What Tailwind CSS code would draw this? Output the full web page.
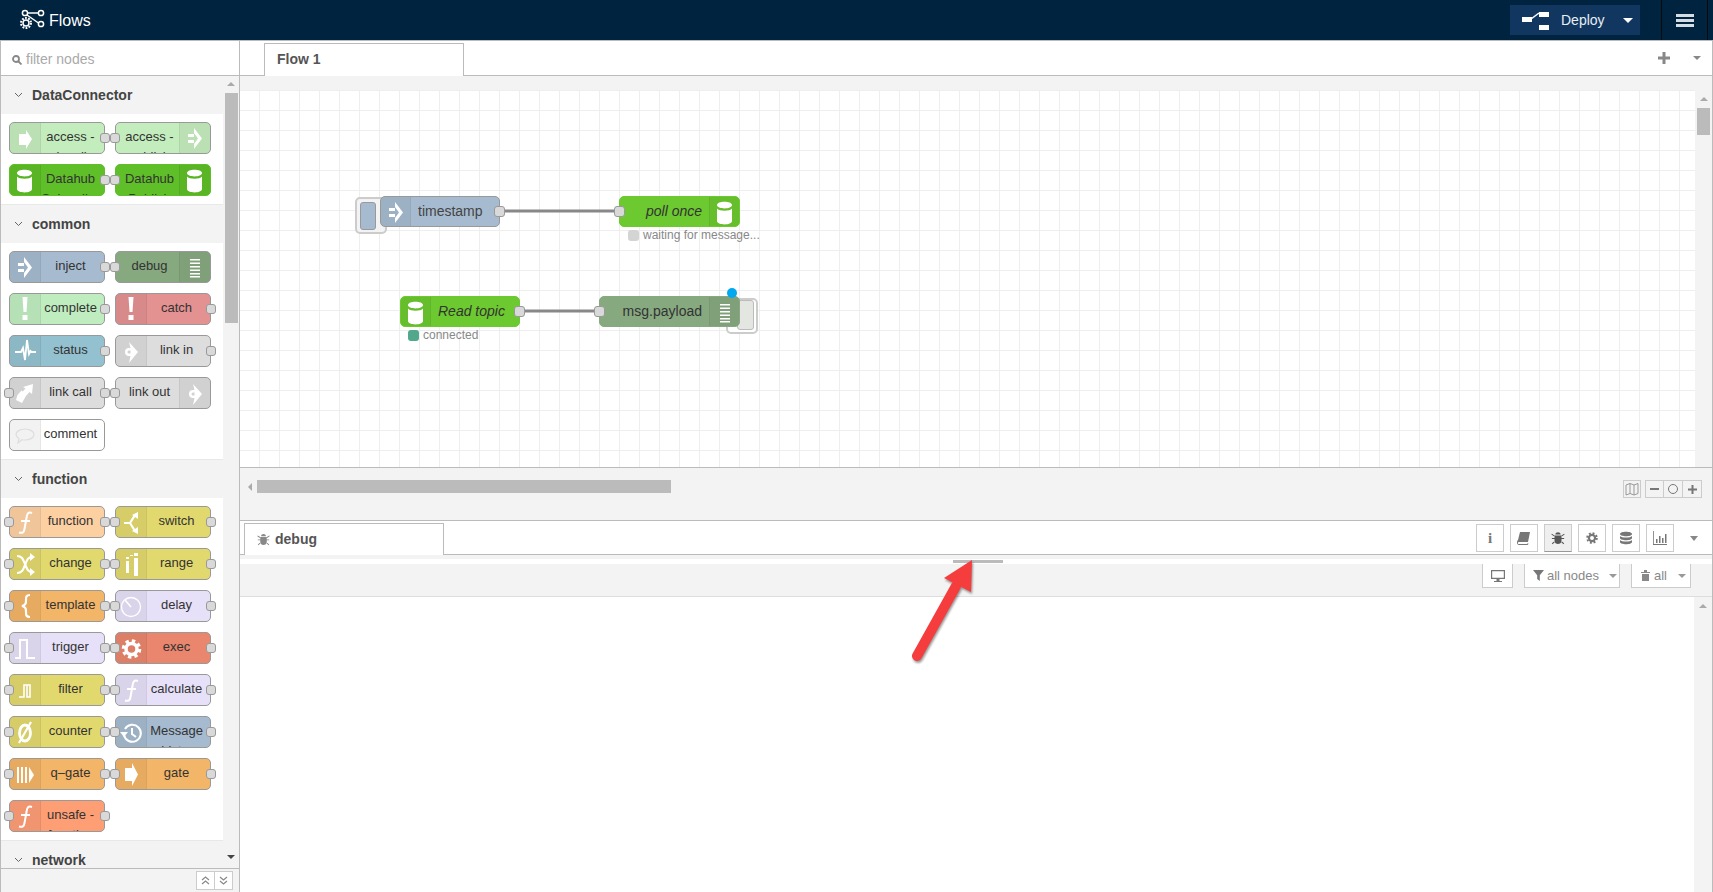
<!DOCTYPE html>
<html lang="en">
<head>
  <meta charset="UTF-8" />
  <title>Flows</title>
  <script src="https://cdn.jsdelivr.net/npm/@tailwindcss/browser@4"></script>
</head>
<body class="relative h-[892px] w-[1713px] overflow-hidden bg-white font-['Liberation_Sans',Arial,sans-serif] text-[#333]">

  <!-- icons used by the palette and the canvas -->
  <svg class="hidden">
    <symbol id="i-gate" viewBox="0 0 30 30"><path fill="currentColor" d="M9 9h7V4l6 11.500L16 27v-5H9z"/></symbol>
    <symbol id="i-access" viewBox="0 0 30 30"><path fill="currentColor" d="M9 11h7V7l6 9-6 10v-4H9z"/></symbol>
    <symbol id="i-inject" viewBox="0 0 30 30"><path fill="currentColor" d="M8 11h6v3H8zM8 17h6v3H8zM14 5l8 10.500L14 26v-5l4-5.500-4-5.500z"/></symbol>
    <symbol id="i-db" viewBox="0 0 30 30"><path fill="currentColor" d="M7 8c0-4.500 15-4.500 15 0s-15 4.500-15 0zM7 11.500c2 3 13 3 15 0V24c0 4.500-15 4.500-15 0z"/></symbol>
    <symbol id="i-lines" viewBox="0 0 30 30"><path fill="currentColor" d="M10 7h10v1.500H10zM10 10.500h10V12H10zM10 14h10v1.500H10zM10 17.500h10V19H10zM10 21h10v1.500H10zM10 24h10v1.500H10z"/></symbol>
    <symbol id="i-alert" viewBox="0 0 30 30"><path fill="currentColor" d="M12.500 3h5l-1 15h-3zM12.500 21h5v5h-5z"/></symbol>
    <symbol id="i-pulse" viewBox="0 0 30 30"><path fill="none" stroke="currentColor" stroke-width="1.800" d="M5 16h6l2-4 2 12 2-20 2 14 1.500-3 1 1H26"/></symbol>
    <symbol id="i-link-in" viewBox="0 0 30 30"><path fill="currentColor" fill-rule="evenodd" d="M13 6l9 10-9 11 1.500-7H13a4 4 0 0 1 0-8h1.500zM13 14.500a1.500 1.500 0 0 0 0 3h1.500v-3z"/></symbol>
    <symbol id="i-link-call" viewBox="0 0 30 30"><path fill="currentColor" d="M13 9l10-3-1 10-2.500-2-4.500 5-4-3.500 4.500-5zM7.500 17l4-4.500 5 4.500-4.500 8-6-3z"/></symbol>
    <symbol id="i-comment" viewBox="0 0 30 30"><path fill="none" stroke="currentColor" stroke-width="1.200" d="M15 9c5 0 9 2.500 9 5.500S20 20 15 20c-1 0-2 0-3-.3L8 23l1-4.500c-1.500-1-3-2.500-3-4C6 11.500 10 9 15 9z"/></symbol>
    <symbol id="i-func" viewBox="0 0 30 30"><path fill="none" stroke="currentColor" stroke-width="2" d="M22 6c-4-1.500-5 1-5.500 5l-2 11c-.5 3.500-2 4.500-5.500 3.500M11 14h9"/></symbol>
    <symbol id="i-switch" viewBox="0 0 30 30"><path fill="none" stroke="currentColor" stroke-width="2.200" d="M8 16h6l5-8M14 16l5 8"/><path fill="currentColor" d="M16 8l6-3v7zM16 24l6 3v-7z"/></symbol>
    <symbol id="i-change" viewBox="0 0 30 30"><path fill="none" stroke="currentColor" stroke-width="2.200" d="M7 7c5 0 6 3 8 8s3 8 7 8M7 24c5 0 6-3 8-8s3-8 7-8"/><path fill="currentColor" d="M20 4l5 4-5 4zM20 19l5 4-5 4z"/></symbol>
    <symbol id="i-range" viewBox="0 0 30 30"><path fill="currentColor" d="M10 12h3v12h-3zM10 8h3v2h-3zM18 9h4v18h-4zM18 4h4v3h-4zM14 6h3v1h-3z"/></symbol>
    <symbol id="i-brace" viewBox="0 0 30 30"><path fill="none" stroke="currentColor" stroke-width="2.200" d="M20 4c-4 0-4 2-4 5s0 5-4 6c4 1 4 3 4 6s0 5 4 5"/></symbol>
    <symbol id="i-clock" viewBox="0 0 30 30"><circle cx="15" cy="16" r="9.500" fill="none" stroke="currentColor" stroke-width="1.300"/><path fill="none" stroke="currentColor" stroke-width="1.500" d="M9 9l6 7"/></symbol>
    <symbol id="i-trigger" viewBox="0 0 30 30"><path fill="none" stroke="currentColor" stroke-width="2" d="M5 25h5V7h7v18h8"/></symbol>
    <symbol id="i-gear" viewBox="0 0 30 30"><circle cx="15.500" cy="16" r="5.500" fill="none" stroke="currentColor" stroke-width="3.500"/><circle cx="15.500" cy="16" r="8" fill="none" stroke="currentColor" stroke-width="3.500" stroke-dasharray="3.300 3"/></symbol>
    <symbol id="i-filter" viewBox="0 0 30 30"><path fill="none" stroke="currentColor" stroke-width="1.600" d="M9 22h5V10h6v12h-3V10"/></symbol>
    <symbol id="i-counter" viewBox="0 0 30 30"><ellipse cx="15" cy="16" rx="5.500" ry="8" fill="none" stroke="currentColor" stroke-width="2.800"/><path stroke="currentColor" stroke-width="2.200" d="M9 26L21 5"/></symbol>
    <symbol id="i-history" viewBox="0 0 30 30"><path fill="none" stroke="currentColor" stroke-width="2" d="M9 12a8.500 8.500 0 1 1-1 6M16 11v6l4 3"/><path fill="currentColor" d="M4 15h8l-4 5z"/></symbol>
    <symbol id="i-qgate" viewBox="0 0 30 30"><path fill="currentColor" d="M7 8h2v16H7zM11 8h2v16h-2zM15 8h2v16h-2zM19 8l5 8-5 8z"/></symbol>
    <symbol id="i-bug" viewBox="0 0 16 16"><path fill="currentColor" d="M5 4c0-3.500 6-3.500 6 0zM4 5h8v6c0 5-8 5-8 0zM1 3l3 2-.6 1L.4 4zM15 3l-3 2 .6 1 3-2zM1 8h3v1H1zM12 8h3v1h-3zM3.500 12l.6 1-2.500 2-.6-1zM12.500 12l-.6 1 2.500 2 .6-1z"/></symbol>
    <symbol id="i-cog" viewBox="0 0 16 16"><circle cx="8" cy="8" r="3.500" fill="none" stroke="currentColor" stroke-width="2.500"/><circle cx="8" cy="8" r="5.500" fill="none" stroke="currentColor" stroke-width="2.200" stroke-dasharray="2.200 2.120"/></symbol>
  </svg>

  <!-- top bar -->
  <header class="flex h-[41px] items-stretch border-b border-[#bbb] bg-[#00233f] text-white">
    <div class="flex items-center pl-[19px]">
      <svg class="h-[24px] w-[26px]" viewBox="0 0 26 24" fill="none" stroke="white" stroke-width="1.500">
        <circle cx="6" cy="5" r="2.600"/><circle cx="22" cy="5" r="2.600"/><circle cx="22" cy="16" r="2.600"/>
        <path d="M8.600 5h10.800M8 7l11.500 8"/>
        <circle cx="7" cy="15" r="3"/><circle cx="7" cy="15" r="5" stroke-width="2" stroke-dasharray="1.800 1.340"/>
      </svg>
      <span class="ml-[4px] pt-[2px] text-[16px]">Flows</span>
    </div>
    <div class="ml-auto mr-[5px] flex items-stretch">
      <div class="my-[5px] flex w-[130px] items-center bg-[#11365f] pl-[12px]">
        <svg class="h-[20px] w-[30px]" viewBox="0 0 30 20" fill="white"><path d="M0 7h10v5H0zM17 2h10v5H17zM17 15h10v5H17z"/><path d="M9 9l8-6" stroke="white" stroke-width="1.500"/></svg>
        <span class="ml-[9px] pt-[1px] text-[14px] text-[#e8eef5]">Deploy</span>
        <span class="ml-[18px] h-0 w-0 border-x-[5px] border-t-[5px] border-x-transparent border-t-white"></span>
      </div>
      <div class="ml-[21px] flex w-[47px] items-center justify-center border-x border-[#0a0a0a]">
        <div class="flex w-[18px] flex-col gap-[2px]">
          <span class="h-[3px] bg-[#d5dce3]"></span><span class="h-[3px] bg-[#d5dce3]"></span><span class="h-[3px] bg-[#d5dce3]"></span>
        </div>
      </div>
    </div>
  </header>

  <main class="flex h-[851px] border-x border-[#bbb]">
    <!-- palette -->
    <aside class="flex w-[239px] shrink-0 flex-col border-r border-[#bbb]">
      <div class="flex h-[35px] shrink-0 items-center border-b border-[#bbb] pt-[3px] pl-[11px]">
        <svg class="h-[10px] w-[10px]" viewBox="0 0 10 10" fill="none" stroke="#888" stroke-width="1.800"><circle cx="4" cy="4" r="3"/><path d="M6.500 6.500L9.500 9.500"/></svg>
        <span class="ml-[4px] text-[14px] text-[#aaa]">filter nodes</span>
      </div>
      <div class="relative flex min-h-0 flex-1 overflow-hidden bg-[#f3f3f3]">
        <div class="w-[222px] overflow-hidden">
          <div class="flex h-[38px] items-center pl-[13px] text-[14px] font-bold text-[#444]">
            <svg class="h-[6px] w-[9px]" viewBox="0 0 9 6" fill="none" stroke="#666"><path d="M1 1l3.500 3.500L8 1"/></svg><span class="ml-[9px]">DataConnector</span>
          </div>
          <div class="grid grid-cols-[96px_96px] gap-[10px] border-b border-[#e8e8e8] bg-white pt-[8px] pb-[8px] pl-[8px]">
            <div class="relative flex h-8 rounded-[5px] border border-[#999] bg-[#c4edbd] text-[13px]">
              <div class="w-[31px] shrink-0 rounded-l-[4px] border-r border-black/5 bg-black/5 text-white"><svg class="size-[30px]"><use href="#i-access"/></svg></div>
              <div class="mr-[4px] flex-1 overflow-hidden pt-[4px] text-center leading-[20px]">access - subscribe</div>
              <span class="absolute top-[10px] -right-[6px] size-[10px] rounded-[3px] border border-[#999] bg-[#d9d9d9]"></span>
            </div>
            <div class="relative flex h-8 rounded-[5px] border border-[#999] bg-[#c4edbd] text-[13px]">
              <span class="absolute top-[10px] -left-[6px] size-[10px] rounded-[3px] border border-[#999] bg-[#d9d9d9]"></span>
              <div class="ml-[4px] flex-1 overflow-hidden pt-[4px] text-center leading-[20px]">access - publish</div>
              <div class="w-[31px] shrink-0 rounded-r-[4px] border-l border-black/5 bg-black/5 text-white"><svg class="size-[30px]"><use href="#i-inject"/></svg></div>
            </div>
            <div class="relative flex h-8 rounded-[5px] border border-[#5fbf28] bg-[#5fbf28] text-[13px]">
              <div class="w-[31px] shrink-0 rounded-l-[4px] border-r border-black/5 bg-black/5 text-white"><svg class="size-[30px]"><use href="#i-db"/></svg></div>
              <div class="mr-[4px] flex-1 overflow-hidden pt-[4px] text-center leading-[20px]">Datahub Subscribe</div>
              <span class="absolute top-[10px] -right-[6px] size-[10px] rounded-[3px] border border-[#999] bg-[#d9d9d9]"></span>
            </div>
            <div class="relative flex h-8 rounded-[5px] border border-[#5fbf28] bg-[#5fbf28] text-[13px]">
              <span class="absolute top-[10px] -left-[6px] size-[10px] rounded-[3px] border border-[#999] bg-[#d9d9d9]"></span>
              <div class="ml-[4px] flex-1 overflow-hidden pt-[4px] text-center leading-[20px]">Datahub Publish</div>
              <div class="w-[31px] shrink-0 rounded-r-[4px] border-l border-black/5 bg-black/5 text-white"><svg class="size-[30px]"><use href="#i-db"/></svg></div>
            </div>
          </div>

          <div class="flex h-[38px] items-center pl-[13px] text-[14px] font-bold text-[#444]">
            <svg class="h-[6px] w-[9px]" viewBox="0 0 9 6" fill="none" stroke="#666"><path d="M1 1l3.500 3.500L8 1"/></svg><span class="ml-[9px]">common</span>
          </div>
          <div class="grid grid-cols-[96px_96px] gap-[10px] border-b border-[#e8e8e8] bg-white pt-[8px] pb-[8px] pl-[8px]">
            <div class="relative flex h-8 rounded-[5px] border border-[#999] bg-[#a6bbcf] text-[13px]">
              <div class="w-[31px] shrink-0 rounded-l-[4px] border-r border-black/5 bg-black/5 text-white"><svg class="size-[30px]"><use href="#i-inject"/></svg></div>
              <div class="mr-[4px] flex-1 overflow-hidden pt-[4px] text-center leading-[20px]">inject</div>
              <span class="absolute top-[10px] -right-[6px] size-[10px] rounded-[3px] border border-[#999] bg-[#d9d9d9]"></span>
            </div>
            <div class="relative flex h-8 rounded-[5px] border border-[#999] bg-[#87a980] text-[13px]">
              <span class="absolute top-[10px] -left-[6px] size-[10px] rounded-[3px] border border-[#999] bg-[#d9d9d9]"></span>
              <div class="ml-[4px] flex-1 overflow-hidden pt-[4px] text-center leading-[20px]">debug</div>
              <div class="w-[31px] shrink-0 rounded-r-[4px] border-l border-black/5 bg-black/5 text-white"><svg class="size-[30px]"><use href="#i-lines"/></svg></div>
            </div>
            <div class="relative flex h-8 rounded-[5px] border border-[#999] bg-[#c0edc0] text-[13px]">
              <div class="w-[31px] shrink-0 rounded-l-[4px] border-r border-black/5 bg-black/5 text-white"><svg class="size-[30px]"><use href="#i-alert"/></svg></div>
              <div class="mr-[4px] flex-1 overflow-hidden pt-[4px] text-center leading-[20px]">complete</div>
              <span class="absolute top-[10px] -right-[6px] size-[10px] rounded-[3px] border border-[#999] bg-[#d9d9d9]"></span>
            </div>
            <div class="relative flex h-8 rounded-[5px] border border-[#999] bg-[#e49191] text-[13px]">
              <div class="w-[31px] shrink-0 rounded-l-[4px] border-r border-black/5 bg-black/5 text-white"><svg class="size-[30px]"><use href="#i-alert"/></svg></div>
              <div class="mr-[4px] flex-1 overflow-hidden pt-[4px] text-center leading-[20px]">catch</div>
              <span class="absolute top-[10px] -right-[6px] size-[10px] rounded-[3px] border border-[#999] bg-[#d9d9d9]"></span>
            </div>
            <div class="relative flex h-8 rounded-[5px] border border-[#999] bg-[#94c1d0] text-[13px]">
              <div class="w-[31px] shrink-0 rounded-l-[4px] border-r border-black/5 bg-black/5 text-white"><svg class="size-[30px]"><use href="#i-pulse"/></svg></div>
              <div class="mr-[4px] flex-1 overflow-hidden pt-[4px] text-center leading-[20px]">status</div>
              <span class="absolute top-[10px] -right-[6px] size-[10px] rounded-[3px] border border-[#999] bg-[#d9d9d9]"></span>
            </div>
            <div class="relative flex h-8 rounded-[5px] border border-[#999] bg-[#dddddd] text-[13px]">
              <div class="w-[31px] shrink-0 rounded-l-[4px] border-r border-black/5 bg-black/5 text-white"><svg class="size-[30px]"><use href="#i-link-in"/></svg></div>
              <div class="mr-[4px] flex-1 overflow-hidden pt-[4px] text-center leading-[20px]">link in</div>
              <span class="absolute top-[10px] -right-[6px] size-[10px] rounded-[3px] border border-[#999] bg-[#d9d9d9]"></span>
            </div>
            <div class="relative flex h-8 rounded-[5px] border border-[#999] bg-[#dddddd] text-[13px]">
              <span class="absolute top-[10px] -left-[6px] size-[10px] rounded-[3px] border border-[#999] bg-[#d9d9d9]"></span>
              <div class="w-[31px] shrink-0 rounded-l-[4px] border-r border-black/5 bg-black/5 text-white"><svg class="size-[30px]"><use href="#i-link-call"/></svg></div>
              <div class="mr-[4px] flex-1 overflow-hidden pt-[4px] text-center leading-[20px]">link call</div>
              <span class="absolute top-[10px] -right-[6px] size-[10px] rounded-[3px] border border-[#999] bg-[#d9d9d9]"></span>
            </div>
            <div class="relative flex h-8 rounded-[5px] border border-[#999] bg-[#dddddd] text-[13px]">
              <span class="absolute top-[10px] -left-[6px] size-[10px] rounded-[3px] border border-[#999] bg-[#d9d9d9]"></span>
              <div class="ml-[4px] flex-1 overflow-hidden pt-[4px] text-center leading-[20px]">link out</div>
              <div class="w-[31px] shrink-0 rounded-r-[4px] border-l border-black/5 bg-black/5 text-white"><svg class="size-[30px]"><use href="#i-link-in"/></svg></div>
            </div>
            <div class="relative flex h-8 rounded-[5px] border border-[#999] bg-white text-[13px]">
              <div class="w-[31px] shrink-0 rounded-l-[4px] border-r border-black/5 bg-black/5 text-[#ddd]"><svg class="size-[30px]"><use href="#i-comment"/></svg></div>
              <div class="mr-[4px] flex-1 overflow-hidden pt-[4px] text-center leading-[20px]">comment</div>
            </div>
          </div>

          <div class="flex h-[38px] items-center pl-[13px] text-[14px] font-bold text-[#444]">
            <svg class="h-[6px] w-[9px]" viewBox="0 0 9 6" fill="none" stroke="#666"><path d="M1 1l3.500 3.500L8 1"/></svg><span class="ml-[9px]">function</span>
          </div>
          <div class="grid grid-cols-[96px_96px] gap-[10px] border-b border-[#e8e8e8] bg-white pt-[8px] pb-[8px] pl-[8px]">
            <div class="relative flex h-8 rounded-[5px] border border-[#999] bg-[#fdd0a2] text-[13px]">
              <span class="absolute top-[10px] -left-[6px] size-[10px] rounded-[3px] border border-[#999] bg-[#d9d9d9]"></span>
              <div class="w-[31px] shrink-0 rounded-l-[4px] border-r border-black/5 bg-black/5 text-white"><svg class="size-[30px]"><use href="#i-func"/></svg></div>
              <div class="mr-[4px] flex-1 overflow-hidden pt-[4px] text-center leading-[20px]">function</div>
              <span class="absolute top-[10px] -right-[6px] size-[10px] rounded-[3px] border border-[#999] bg-[#d9d9d9]"></span>
            </div>
            <div class="relative flex h-8 rounded-[5px] border border-[#999] bg-[#e2d96e] text-[13px]">
              <span class="absolute top-[10px] -left-[6px] size-[10px] rounded-[3px] border border-[#999] bg-[#d9d9d9]"></span>
              <div class="w-[31px] shrink-0 rounded-l-[4px] border-r border-black/5 bg-black/5 text-white"><svg class="size-[30px]"><use href="#i-switch"/></svg></div>
              <div class="mr-[4px] flex-1 overflow-hidden pt-[4px] text-center leading-[20px]">switch</div>
              <span class="absolute top-[10px] -right-[6px] size-[10px] rounded-[3px] border border-[#999] bg-[#d9d9d9]"></span>
            </div>
            <div class="relative flex h-8 rounded-[5px] border border-[#999] bg-[#e2d96e] text-[13px]">
              <span class="absolute top-[10px] -left-[6px] size-[10px] rounded-[3px] border border-[#999] bg-[#d9d9d9]"></span>
              <div class="w-[31px] shrink-0 rounded-l-[4px] border-r border-black/5 bg-black/5 text-white"><svg class="size-[30px]"><use href="#i-change"/></svg></div>
              <div class="mr-[4px] flex-1 overflow-hidden pt-[4px] text-center leading-[20px]">change</div>
              <span class="absolute top-[10px] -right-[6px] size-[10px] rounded-[3px] border border-[#999] bg-[#d9d9d9]"></span>
            </div>
            <div class="relative flex h-8 rounded-[5px] border border-[#999] bg-[#e2d96e] text-[13px]">
              <span class="absolute top-[10px] -left-[6px] size-[10px] rounded-[3px] border border-[#999] bg-[#d9d9d9]"></span>
              <div class="w-[31px] shrink-0 rounded-l-[4px] border-r border-black/5 bg-black/5 text-white"><svg class="size-[30px]"><use href="#i-range"/></svg></div>
              <div class="mr-[4px] flex-1 overflow-hidden pt-[4px] text-center leading-[20px]">range</div>
              <span class="absolute top-[10px] -right-[6px] size-[10px] rounded-[3px] border border-[#999] bg-[#d9d9d9]"></span>
            </div>
            <div class="relative flex h-8 rounded-[5px] border border-[#999] bg-[#f3b567] text-[13px]">
              <span class="absolute top-[10px] -left-[6px] size-[10px] rounded-[3px] border border-[#999] bg-[#d9d9d9]"></span>
              <div class="w-[31px] shrink-0 rounded-l-[4px] border-r border-black/5 bg-black/5 text-white"><svg class="size-[30px]"><use href="#i-brace"/></svg></div>
              <div class="mr-[4px] flex-1 overflow-hidden pt-[4px] text-center leading-[20px]">template</div>
              <span class="absolute top-[10px] -right-[6px] size-[10px] rounded-[3px] border border-[#999] bg-[#d9d9d9]"></span>
            </div>
            <div class="relative flex h-8 rounded-[5px] border border-[#999] bg-[#e6e0f8] text-[13px]">
              <span class="absolute top-[10px] -left-[6px] size-[10px] rounded-[3px] border border-[#999] bg-[#d9d9d9]"></span>
              <div class="w-[31px] shrink-0 rounded-l-[4px] border-r border-black/5 bg-black/5 text-white"><svg class="size-[30px]"><use href="#i-clock"/></svg></div>
              <div class="mr-[4px] flex-1 overflow-hidden pt-[4px] text-center leading-[20px]">delay</div>
              <span class="absolute top-[10px] -right-[6px] size-[10px] rounded-[3px] border border-[#999] bg-[#d9d9d9]"></span>
            </div>
            <div class="relative flex h-8 rounded-[5px] border border-[#999] bg-[#e6e0f8] text-[13px]">
              <span class="absolute top-[10px] -left-[6px] size-[10px] rounded-[3px] border border-[#999] bg-[#d9d9d9]"></span>
              <div class="w-[31px] shrink-0 rounded-l-[4px] border-r border-black/5 bg-black/5 text-white"><svg class="size-[30px]"><use href="#i-trigger"/></svg></div>
              <div class="mr-[4px] flex-1 overflow-hidden pt-[4px] text-center leading-[20px]">trigger</div>
              <span class="absolute top-[10px] -right-[6px] size-[10px] rounded-[3px] border border-[#999] bg-[#d9d9d9]"></span>
            </div>
            <div class="relative flex h-8 rounded-[5px] border border-[#999] bg-[#e9866d] text-[13px]">
              <span class="absolute top-[10px] -left-[6px] size-[10px] rounded-[3px] border border-[#999] bg-[#d9d9d9]"></span>
              <div class="w-[31px] shrink-0 rounded-l-[4px] border-r border-black/5 bg-black/5 text-white"><svg class="size-[30px]"><use href="#i-gear"/></svg></div>
              <div class="mr-[4px] flex-1 overflow-hidden pt-[4px] text-center leading-[20px]">exec</div>
              <span class="absolute top-[10px] -right-[6px] size-[10px] rounded-[3px] border border-[#999] bg-[#d9d9d9]"></span>
            </div>
            <div class="relative flex h-8 rounded-[5px] border border-[#999] bg-[#e2d96e] text-[13px]">
              <span class="absolute top-[10px] -left-[6px] size-[10px] rounded-[3px] border border-[#999] bg-[#d9d9d9]"></span>
              <div class="w-[31px] shrink-0 rounded-l-[4px] border-r border-black/5 bg-black/5 text-white"><svg class="size-[30px]"><use href="#i-filter"/></svg></div>
              <div class="mr-[4px] flex-1 overflow-hidden pt-[4px] text-center leading-[20px]">filter</div>
              <span class="absolute top-[10px] -right-[6px] size-[10px] rounded-[3px] border border-[#999] bg-[#d9d9d9]"></span>
            </div>
            <div class="relative flex h-8 rounded-[5px] border border-[#999] bg-[#e6e0f8] text-[13px]">
              <span class="absolute top-[10px] -left-[6px] size-[10px] rounded-[3px] border border-[#999] bg-[#d9d9d9]"></span>
              <div class="w-[31px] shrink-0 rounded-l-[4px] border-r border-black/5 bg-black/5 text-white"><svg class="size-[30px]"><use href="#i-func"/></svg></div>
              <div class="mr-[4px] flex-1 overflow-hidden pt-[4px] text-center leading-[20px]">calculate</div>
              <span class="absolute top-[10px] -right-[6px] size-[10px] rounded-[3px] border border-[#999] bg-[#d9d9d9]"></span>
            </div>
            <div class="relative flex h-8 rounded-[5px] border border-[#999] bg-[#e2d96e] text-[13px]">
              <span class="absolute top-[10px] -left-[6px] size-[10px] rounded-[3px] border border-[#999] bg-[#d9d9d9]"></span>
              <div class="w-[31px] shrink-0 rounded-l-[4px] border-r border-black/5 bg-black/5 text-white"><svg class="size-[30px]"><use href="#i-counter"/></svg></div>
              <div class="mr-[4px] flex-1 overflow-hidden pt-[4px] text-center leading-[20px]">counter</div>
              <span class="absolute top-[10px] -right-[6px] size-[10px] rounded-[3px] border border-[#999] bg-[#d9d9d9]"></span>
            </div>
            <div class="relative flex h-8 rounded-[5px] border border-[#999] bg-[#a6bbcf] text-[13px]">
              <span class="absolute top-[10px] -left-[6px] size-[10px] rounded-[3px] border border-[#999] bg-[#d9d9d9]"></span>
              <div class="w-[31px] shrink-0 rounded-l-[4px] border-r border-black/5 bg-black/5 text-white"><svg class="size-[30px]"><use href="#i-history"/></svg></div>
              <div class="mr-[4px] flex-1 overflow-hidden pt-[4px] text-center leading-[20px]">Message - history</div>
              <span class="absolute top-[10px] -right-[6px] size-[10px] rounded-[3px] border border-[#999] bg-[#d9d9d9]"></span>
            </div>
            <div class="relative flex h-8 rounded-[5px] border border-[#999] bg-[#f3b567] text-[13px]">
              <span class="absolute top-[10px] -left-[6px] size-[10px] rounded-[3px] border border-[#999] bg-[#d9d9d9]"></span>
              <div class="w-[31px] shrink-0 rounded-l-[4px] border-r border-black/5 bg-black/5 text-white"><svg class="size-[30px]"><use href="#i-qgate"/></svg></div>
              <div class="mr-[4px] flex-1 overflow-hidden pt-[4px] text-center leading-[20px]">q–gate</div>
              <span class="absolute top-[10px] -right-[6px] size-[10px] rounded-[3px] border border-[#999] bg-[#d9d9d9]"></span>
            </div>
            <div class="relative flex h-8 rounded-[5px] border border-[#999] bg-[#f3b567] text-[13px]">
              <span class="absolute top-[10px] -left-[6px] size-[10px] rounded-[3px] border border-[#999] bg-[#d9d9d9]"></span>
              <div class="w-[31px] shrink-0 rounded-l-[4px] border-r border-black/5 bg-black/5 text-white"><svg class="size-[30px]"><use href="#i-gate"/></svg></div>
              <div class="mr-[4px] flex-1 overflow-hidden pt-[4px] text-center leading-[20px]">gate</div>
              <span class="absolute top-[10px] -right-[6px] size-[10px] rounded-[3px] border border-[#999] bg-[#d9d9d9]"></span>
            </div>
            <div class="relative flex h-8 rounded-[5px] border border-[#999] bg-[#fd9e75] text-[13px]">
              <span class="absolute top-[10px] -left-[6px] size-[10px] rounded-[3px] border border-[#999] bg-[#d9d9d9]"></span>
              <div class="w-[31px] shrink-0 rounded-l-[4px] border-r border-black/5 bg-black/5 text-white"><svg class="size-[30px]"><use href="#i-func"/></svg></div>
              <div class="mr-[4px] flex-1 overflow-hidden pt-[4px] text-center leading-[20px]">unsafe - function</div>
              <span class="absolute top-[10px] -right-[6px] size-[10px] rounded-[3px] border border-[#999] bg-[#d9d9d9]"></span>
            </div>
          </div>

          <div class="flex h-[38px] items-center pl-[13px] text-[14px] font-bold text-[#444]">
            <svg class="h-[6px] w-[9px]" viewBox="0 0 9 6" fill="none" stroke="#666"><path d="M1 1l3.500 3.500L8 1"/></svg><span class="ml-[9px]">network</span>
          </div>
        </div>
        <!-- palette scrollbar -->
        <div class="flex w-[16px] flex-col items-center pt-[6px]">
          <span class="h-0 w-0 border-x-[4px] border-b-[4px] border-x-transparent border-b-[#aaa]"></span>
          <span class="mt-[7px] h-[230px] w-[13px] bg-[#bbb]"></span>
          <span class="mt-[532px] h-0 w-0 border-x-[4px] border-t-[4px] border-x-transparent border-t-[#444]"></span>
        </div>
      </div>
      <div class="flex h-[24px] shrink-0 items-center justify-end border-t border-[#bbb] bg-[#f3f3f3] pr-[6px]">
        <div class="flex h-[19px] w-[37px] divide-x divide-[#ccc] border border-[#ccc] bg-white">
          <span class="flex flex-1 items-center justify-center"><svg class="size-[9px]" viewBox="0 0 9 9" fill="none" stroke="#888" stroke-width="1.200"><path d="M1 4l3.500-3L8 4M1 8l3.500-3L8 8"/></svg></span>
          <span class="flex flex-1 items-center justify-center"><svg class="size-[9px]" viewBox="0 0 9 9" fill="none" stroke="#888" stroke-width="1.200"><path d="M1 1l3.500 3L8 1M1 5l3.500 3L8 5"/></svg></span>
        </div>
      </div>
    </aside>

    <!-- workspace -->
    <section class="flex min-w-0 flex-1 flex-col">
      <div class="flex h-[35px] shrink-0 items-end border-b border-[#bbb] pl-[24px]">
        <div class="-mb-px flex h-[33px] w-[200px] items-center border border-b-0 border-[#bbb] bg-white pb-[2px] pl-[12px] text-[14px] font-bold text-[#555]">Flow 1</div>
        <div class="ml-auto mr-[11px] flex items-center self-center">
          <svg class="size-[12px]" viewBox="0 0 12 12" fill="#888"><path d="M4.500 0h3v4.500H12v3H7.500V12h-3V7.500H0v-3h4.500z"/></svg>
          <span class="ml-[23px] h-0 w-0 border-x-[4px] border-t-[4px] border-x-transparent border-t-[#888]"></span>
        </div>
      </div>

      <!-- canvas -->
      <div class="flex h-[444px] shrink-0 flex-col bg-[#f3f3f3] pt-[14px]">
        <div class="flex min-h-0 flex-1 border-b border-[#bbb]">
          <div class="relative min-w-0 flex-1 overflow-hidden bg-white bg-[linear-gradient(to_right,#eee_1px,transparent_1px),linear-gradient(to_bottom,#eee_1px,transparent_1px)] bg-size-[20px_20px] bg-position-[19px_0px]">
            <svg class="absolute inset-0 h-full w-full" fill="none" stroke="#888" stroke-width="3">
              <path d="M262 121H380"/><path d="M282 221H360"/>
            </svg>

            <div class="absolute top-[107px] left-[115px] h-[37px] w-[32px] rounded-[5px] border-2 border-[#ccc] bg-[#f3f3f3] p-[3px]"><div class="h-[28px] w-[16px] rounded-[3px] border border-[#999] bg-[#a6bbcf]"></div></div>
            <div class="absolute top-[106px] left-[140px] flex h-[31px] w-[120px] rounded-[5px] border border-[#999] bg-[#a6bbcf] text-[14px] text-[#444]">
              <div class="w-[30px] shrink-0 rounded-l-[4px] border-r border-black/5 bg-black/5 text-white"><svg class="size-[30px]"><use href="#i-inject"/></svg></div>
              <div class="pl-[7px] leading-[29px]">timestamp</div>
              <span class="absolute top-[9px] -right-[6px] size-[11px] rounded-[3px] border border-[#999] bg-[#d9d9d9]"></span>
            </div>

            <div class="absolute top-[106px] left-[379px] flex h-[31px] w-[121px] justify-end rounded-[5px] border border-[#6cc92f] bg-[#6cc92f] text-[14px] text-[#333] italic">
              <span class="absolute top-[9px] -left-[6px] size-[11px] rounded-[3px] border border-[#999] bg-[#d9d9d9]"></span>
              <div class="pr-[7px] leading-[29px]">poll once</div>
              <div class="w-[30px] shrink-0 rounded-r-[4px] border-l border-black/5 bg-black/5 text-white"><svg class="size-[30px]"><use href="#i-db"/></svg></div>
            </div>
            <div class="absolute top-[140px] left-[388px] flex items-center text-[12px] leading-[11px] text-[#888]">
              <span class="size-[11px] rounded-[3px] bg-[#d4d4d4]"></span><span class="ml-[4px] whitespace-nowrap">waiting for message...</span>
            </div>

            <div class="absolute top-[206px] left-[160px] flex h-[31px] w-[120px] rounded-[5px] border border-[#6cc92f] bg-[#6cc92f] text-[14px] text-[#333] italic">
              <div class="w-[30px] shrink-0 rounded-l-[4px] border-r border-black/5 bg-black/5 text-white"><svg class="size-[30px]"><use href="#i-db"/></svg></div>
              <div class="pl-[7px] leading-[29px]">Read topic</div>
              <span class="absolute top-[9px] -right-[6px] size-[11px] rounded-[3px] border border-[#999] bg-[#d9d9d9]"></span>
            </div>
            <div class="absolute top-[240px] left-[168px] flex items-center text-[12px] leading-[11px] text-[#888]">
              <span class="size-[11px] rounded-[3px] bg-[#52a88a]"></span><span class="ml-[4px]">connected</span>
            </div>

            <div class="absolute top-[208px] left-[486px] h-[36px] w-[32px] rounded-[5px] border-2 border-[#ccc] bg-white"><div class="ml-[9px] h-[30px] w-[17px] rounded-[3px] border border-[#bbb] bg-[#e4e6e1]"></div></div>
            <div class="absolute top-[206px] left-[359px] flex h-[31px] w-[141px] justify-end rounded-[5px] border border-[#87a980] bg-[#87a980] text-[14px] text-[#333]">
              <span class="absolute top-[9px] -left-[6px] size-[11px] rounded-[3px] border border-[#999] bg-[#d9d9d9]"></span>
              <div class="pr-[7px] leading-[29px]">msg.payload</div>
              <div class="w-[30px] shrink-0 rounded-r-[4px] border-l border-black/5 bg-black/5 text-white"><svg class="size-[30px]"><use href="#i-lines"/></svg></div>
            </div>
            <span class="absolute top-[198px] left-[487px] size-[10px] rounded-full bg-[#00a8f0]"></span>
          </div>
          <!-- canvas scrollbar -->
          <div class="flex w-[17px] shrink-0 flex-col items-center pt-[7px]">
            <span class="h-0 w-0 border-x-[4px] border-b-[4px] border-x-transparent border-b-[#aaa]"></span>
            <span class="mt-[7px] h-[27px] w-[13px] bg-[#bbb]"></span>
          </div>
        </div>
        <div class="flex h-[52px] shrink-0 items-start pt-[12px] pl-[8px]">
          <span class="mt-[3px] h-0 w-0 border-y-[4px] border-r-[4px] border-y-transparent border-r-[#aaa]"></span>
          <span class="ml-[5px] h-[13px] w-[414px] bg-[#bbb]"></span>
          <div class="ml-auto mr-[10px] flex">
            <span class="flex h-[18px] w-[18px] items-center justify-center border border-[#ccc]"><svg class="size-[14px]" viewBox="0 0 14 14" fill="none" stroke="#999"><path d="M1 3l4-1.500 4 1.500 4-1.500v10l-4 1.500-4-1.500-4 1.500zM5 1.500v10M9 3v10"/></svg></span>
            <div class="ml-[4px] flex h-[18px] divide-x divide-[#ccc] border border-[#ccc] bg-[#f3f3f3]">
              <span class="flex w-[18px] items-center justify-center"><span class="h-[2px] w-[9px] bg-[#777]"></span></span>
              <span class="flex w-[19px] items-center justify-center"><span class="size-[10px] rounded-full border border-[#777]"></span></span>
              <span class="flex w-[18px] items-center justify-center"><svg class="size-[9px]" viewBox="0 0 9 9" fill="#777"><path d="M3.500 0h2v3.500H9v2H5.500V9h-2V5.500H0v-2h3.500z"/></svg></span>
            </div>
          </div>
        </div>
      </div>

      <!-- sidebar panel -->
      <div class="flex h-[35px] shrink-0 items-end border-y border-[#bbb] pl-[4px]">
        <div class="-mb-px flex h-[32px] w-[200px] items-center border border-b-0 border-[#bbb] bg-white pl-[12px] text-[14px] font-bold text-[#555]">
          <svg class="size-[13px] text-[#888]"><use href="#i-bug"/></svg><span class="ml-[5px]">debug</span>
        </div>
        <div class="mr-[14px] mb-[2px] ml-auto flex items-center gap-[6px] self-end text-[#777]">
          <span class="flex size-[28px] items-center justify-center border border-[#ccc] font-['Liberation_Serif',serif] text-[15px] font-bold">i</span>
          <span class="flex size-[28px] items-center justify-center border border-[#ccc]"><svg class="size-[14px]" viewBox="0 0 14 14" fill="currentColor"><path d="M3 1h10l-2 10H2C.5 11 .5 13 2 13h8l1-1 .5 1-1 1H2C-.5 14-.5 10 1 9z"/></svg></span>
          <span class="flex size-[28px] items-center justify-center border border-[#ccc] border-b-[#999] bg-[#efefef] text-[#555]"><svg class="size-[14px]"><use href="#i-bug"/></svg></span>
          <span class="flex size-[28px] items-center justify-center border border-[#ccc]"><svg class="size-[14px]"><use href="#i-cog"/></svg></span>
          <span class="flex size-[28px] items-center justify-center border border-[#ccc]"><svg class="size-[14px]" viewBox="0 0 14 14" fill="currentColor"><path d="M1 3c0-3 12-3 12 0s-12 3-12 0zM1 5c2 2 10 2 12 0v2c0 3-12 3-12 0zM1 9c2 2 10 2 12 0v2c0 3-12 3-12 0z"/></svg></span>
          <span class="flex size-[28px] items-center justify-center border border-[#ccc]"><svg class="size-[16px]" viewBox="0 0 16 16" fill="currentColor"><path d="M1 1h.8v13H15v1H1zM4 9h1.500v4H4zM7 6h1.500v7H7zM10 8h1.500v5H10zM13 4h1.500v9H13z"/></svg></span>
          <span class="ml-[10px] h-0 w-0 border-x-[4px] border-t-[5px] border-x-transparent border-t-[#888]"></span>
        </div>
      </div>
      <div class="relative h-[9px] shrink-0 bg-white">
        <div class="h-[4px] bg-[#f3f3f3]"></div>
        <span class="absolute top-[5px] left-[713px] h-[3px] w-[50px] bg-[#bbb]"></span>
      </div>
      <div class="flex h-[33px] shrink-0 items-start justify-end gap-[11px] border-b border-[#ddd] bg-[#f3f3f3] pr-[21px] text-[13px] text-[#888]">
        <span class="flex h-[24px] w-[31px] items-center justify-center border border-t-0 border-[#ccc] bg-white"><svg class="size-[14px]" viewBox="0 0 14 14" fill="#777"><path d="M0 1h14v9H8.500v2H11v1H3v-1h2.500v-2H0zM1.200 2.200v6.600h11.600V2.200z"/></svg></span>
        <span class="flex h-[24px] w-[96px] items-center border border-t-0 border-[#ccc] bg-white pl-[8px]"><svg class="size-[11px]" viewBox="0 0 11 11" fill="#777"><path d="M0 0h11L6.800 5.200V11L4.200 9V5.200z"/></svg><span class="ml-[3px]">all nodes</span><span class="ml-[10px] h-0 w-0 border-x-[4px] border-t-[4px] border-x-transparent border-t-[#999]"></span></span>
        <span class="flex h-[24px] w-[60px] items-center border border-t-0 border-[#ccc] bg-white pl-[8px]"><svg class="size-[11px]" viewBox="0 0 11 11" fill="#888"><path d="M1 2h3V0h3v2h3v1H1zM2 4h7v7H2z"/></svg><span class="ml-[3px]">all</span><span class="ml-[11px] h-0 w-0 border-x-[4px] border-t-[4px] border-x-transparent border-t-[#999]"></span></span>
      </div>
      <div class="flex min-h-0 flex-1 justify-end bg-white">
        <div class="flex w-[18px] justify-center bg-[#f3f3f3] pt-[7px]">
          <span class="h-0 w-0 border-x-[4px] border-b-[4px] border-x-transparent border-b-[#aaa]"></span>
        </div>
      </div>
    </section>
  </main>

  <!-- callout arrow on the screenshot -->
  <svg class="absolute inset-0 h-[892px] w-[1713px] drop-shadow-[1px_2px_1px_rgba(0,0,0,0.4)]" fill="none">
    <path d="M917 656L956 586" stroke="#f53d3d" stroke-width="10" stroke-linecap="round"/>
    <path d="M972 560L944 578L971 592z" fill="#f53d3d"/>
  </svg>
</body>
</html>
